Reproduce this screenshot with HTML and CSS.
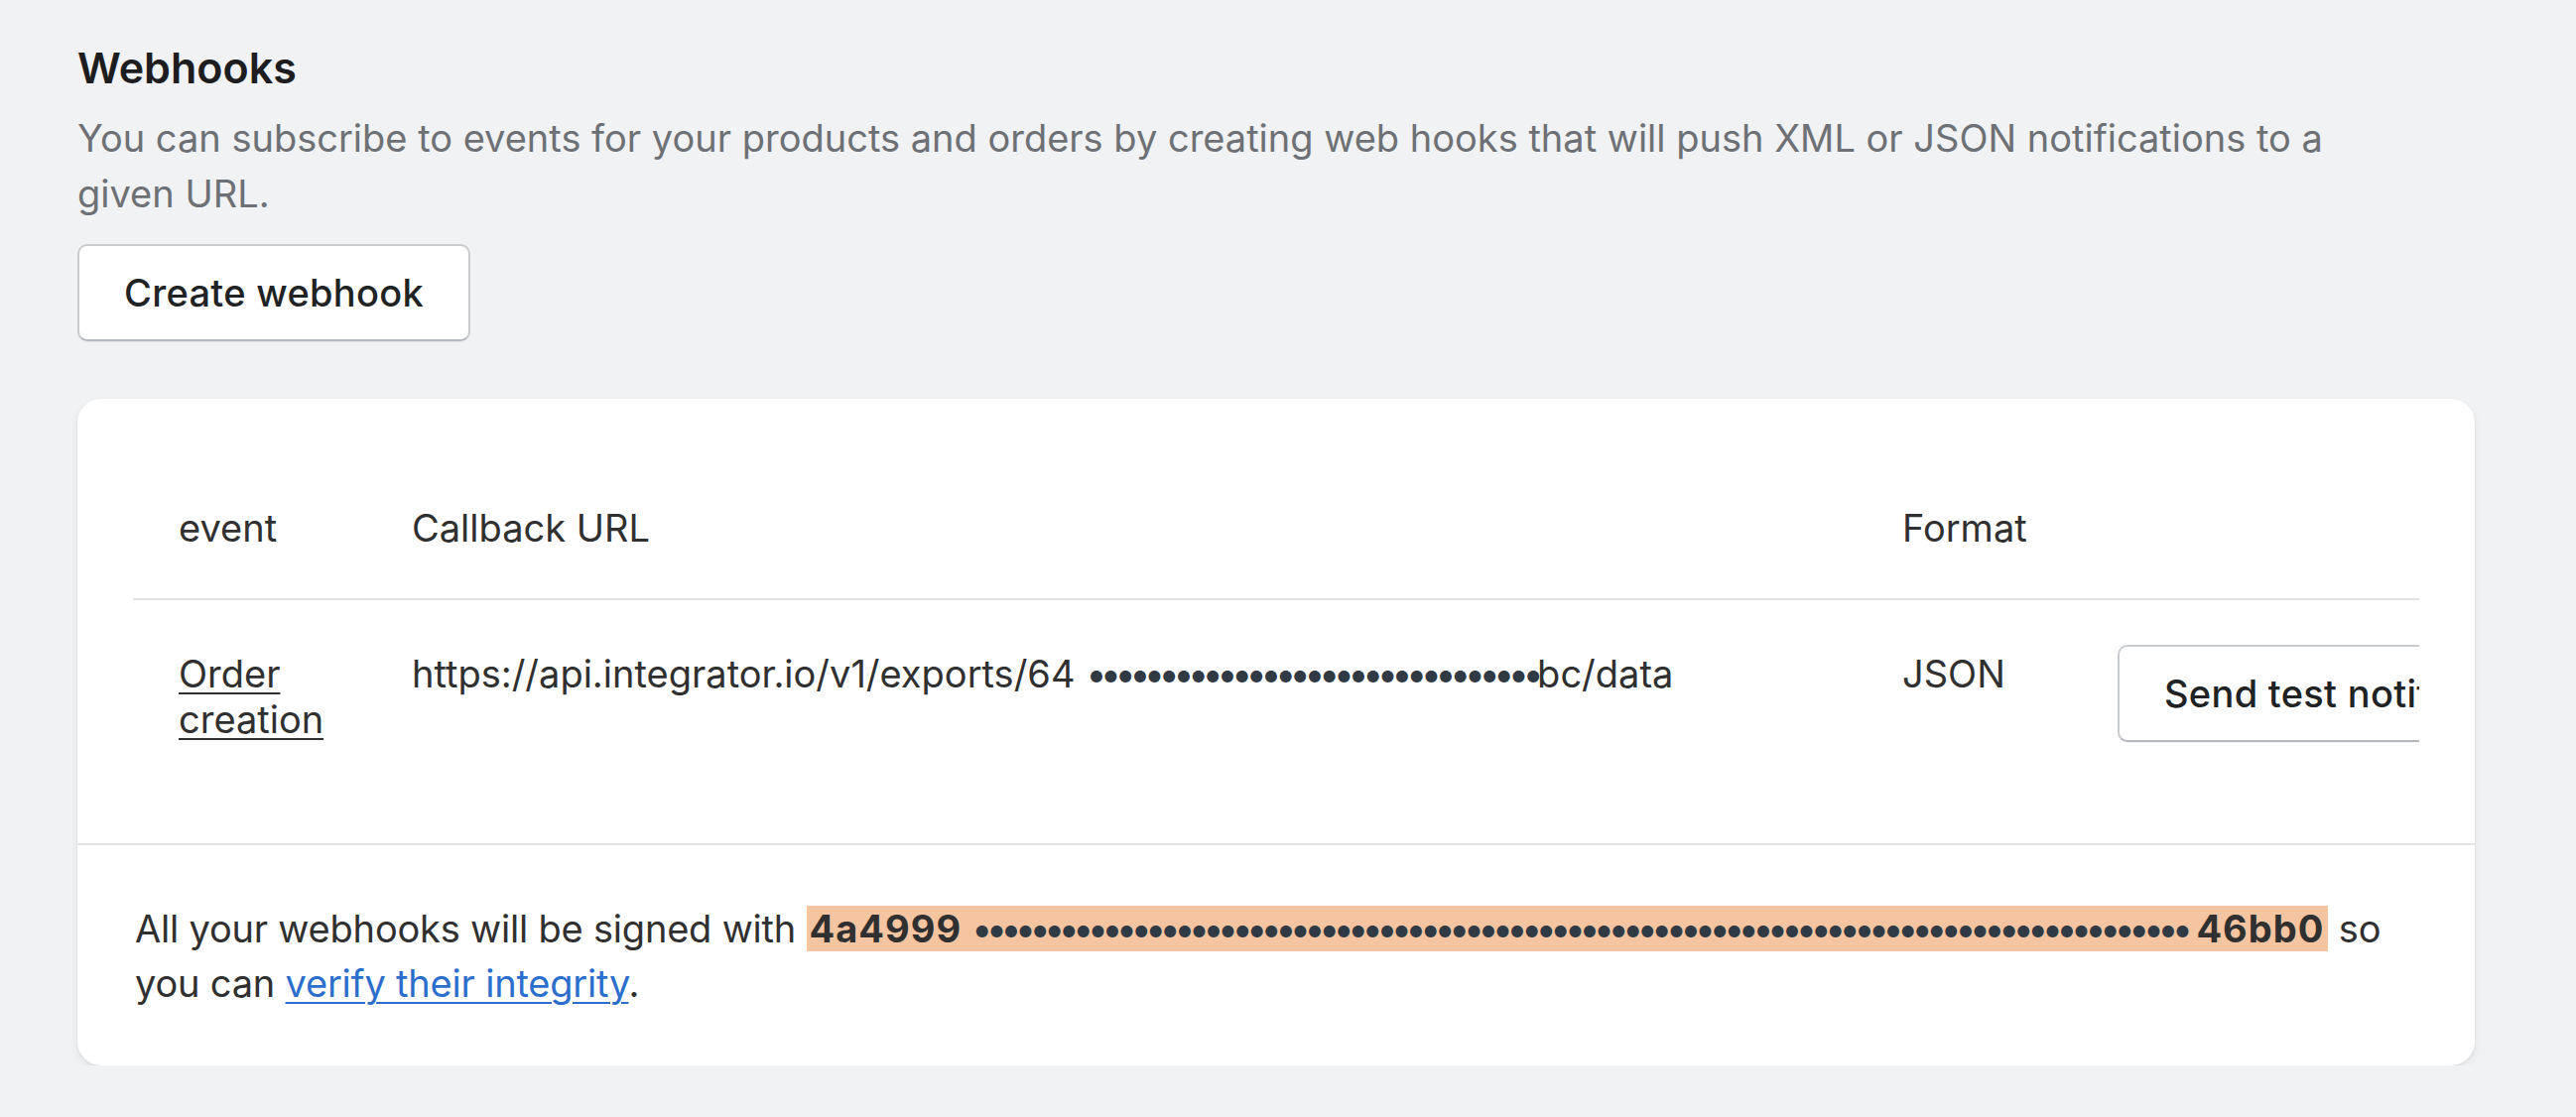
FILE: index.html
```html
<!DOCTYPE html>
<html>
<head>
    <title>Webhooks</title>
    <link rel="stylesheet" href="styles.css">
</head>
<body>
    <div class="page">
        <h2>Webhooks</h2>
        <p class="description">You can subscribe to events for your products and orders by creating web hooks that will push XML or JSON notifications to a given URL.</p>
        <button type="button" class="btn">Create webhook</button>

        <div class="card">
            <div class="table-wrap">
                <table class="hooks">
                    <thead>
                        <tr>
                            <th class="col-event">event</th>
                            <th class="col-url">Callback URL</th>
                            <th class="col-format">Format</th>
                            <th class="col-action"></th>
                        </tr>
                    </thead>
                    <tbody>
                        <tr>
                            <td><a href="#" class="event-link">Order creation</a></td>
                            <td class="url">https://api.integrator.io/v1/exports/64 <span class="mask">•••••••••••••••••••••••••••••••</span>bc/data</td>
                            <td>JSON</td>
                            <td class="action"><button type="button" class="btn">Send test notification</button></td>
                        </tr>
                    </tbody>
                </table>
            </div>
            <div class="footer">
                All your webhooks will be signed with <span class="secret">4a4999 <span class="mask">••••••••••••••••••••••••••••••••••••••••••••••••••••••••••••••••••••••••••••••••••••</span> 46bb0</span> so you can <a href="#" class="link">verify their integrity</a>.
            </div>
        </div>
    </div>
</body>
</html>
```

FILE: styles.css
```css
body {
    margin: 0;
    padding: 0;
    background-color: #f1f2f4;
    font-family: Inter, "Noto Sans", sans-serif;
    color: #303030;
}

.page {
    width: 2416px;
    padding: 42px 0 0 78px;
}

h2 {
    margin: 0;
    font-size: 43px;
    line-height: 52px;
    font-weight: 600;
    color: #1d1d1f;
}

.description {
    margin: 17px 0 0;
    max-width: 2320px;
    font-size: 38px;
    line-height: 56px;
    color: #6d7175;
}

.btn {
    box-sizing: border-box;
    height: 98px;
    margin-top: 23px;
    padding: 0 45px;
    font-family: inherit;
    font-size: 38px;
    font-weight: 500;
    letter-spacing: 0.3px;
    color: #202223;
    white-space: nowrap;
    background: #fff;
    border: 2px solid #c9cccf;
    border-bottom-color: #b5b9be;
    border-radius: 10px;
    box-shadow: 0 1px 0 rgba(0, 0, 0, 0.05);
    cursor: pointer;
}

.card {
    margin-top: 58px;
    background: #fff;
    border-radius: 24px;
    box-shadow: 0 4px 10px rgba(0, 0, 0, 0.06), 0 1px 3px rgba(0, 0, 0, 0.08);
    overflow: hidden;
}

.table-wrap {
    margin: 0 56px;
    padding: 58px 0 54px;
    overflow: hidden;
}

.hooks {
    border-collapse: collapse;
    table-layout: fixed;
    width: 2520px;
    font-size: 38px;
    line-height: 46px;
}

.hooks th {
    padding: 49px 46px 48px;
    text-align: left;
    font-weight: 400;
    color: #303030;
    border-bottom: 2px solid #e3e3e3;
}

.hooks td {
    padding: 51px 46px 48px;
    vertical-align: top;
}

.hooks td.action {
    padding-top: 45px;
}

.hooks td.action .btn {
    margin-top: 0;
}

.col-event {
    width: 143px;
}

.col-url {
    width: 1410px;
}

.col-format {
    width: 125px;
}

.col-action {
    width: 474px;
}

.url {
    white-space: nowrap;
}

.event-link {
    color: #303030;
    text-decoration: underline;
    text-decoration-thickness: 2px;
    text-underline-offset: 5px;
}

.mask {
    letter-spacing: -6.7px;
    color: #303a44;
}

.footer {
    padding: 57px 58px 55px;
    border-top: 2px solid #e3e3e3;
    font-size: 38px;
    line-height: 55px;
    letter-spacing: -0.2px;
}

.secret {
    padding: 0 4px 0 3px;
    font-weight: 700;
    letter-spacing: 1px;
    background: #f5c4a0;
}

.secret .mask {
    font-weight: 400;
    letter-spacing: -6.8px;
}

.link {
    color: #2c6ecb;
    text-decoration: underline;
    text-decoration-thickness: 2px;
    text-underline-offset: 5px;
}
```
